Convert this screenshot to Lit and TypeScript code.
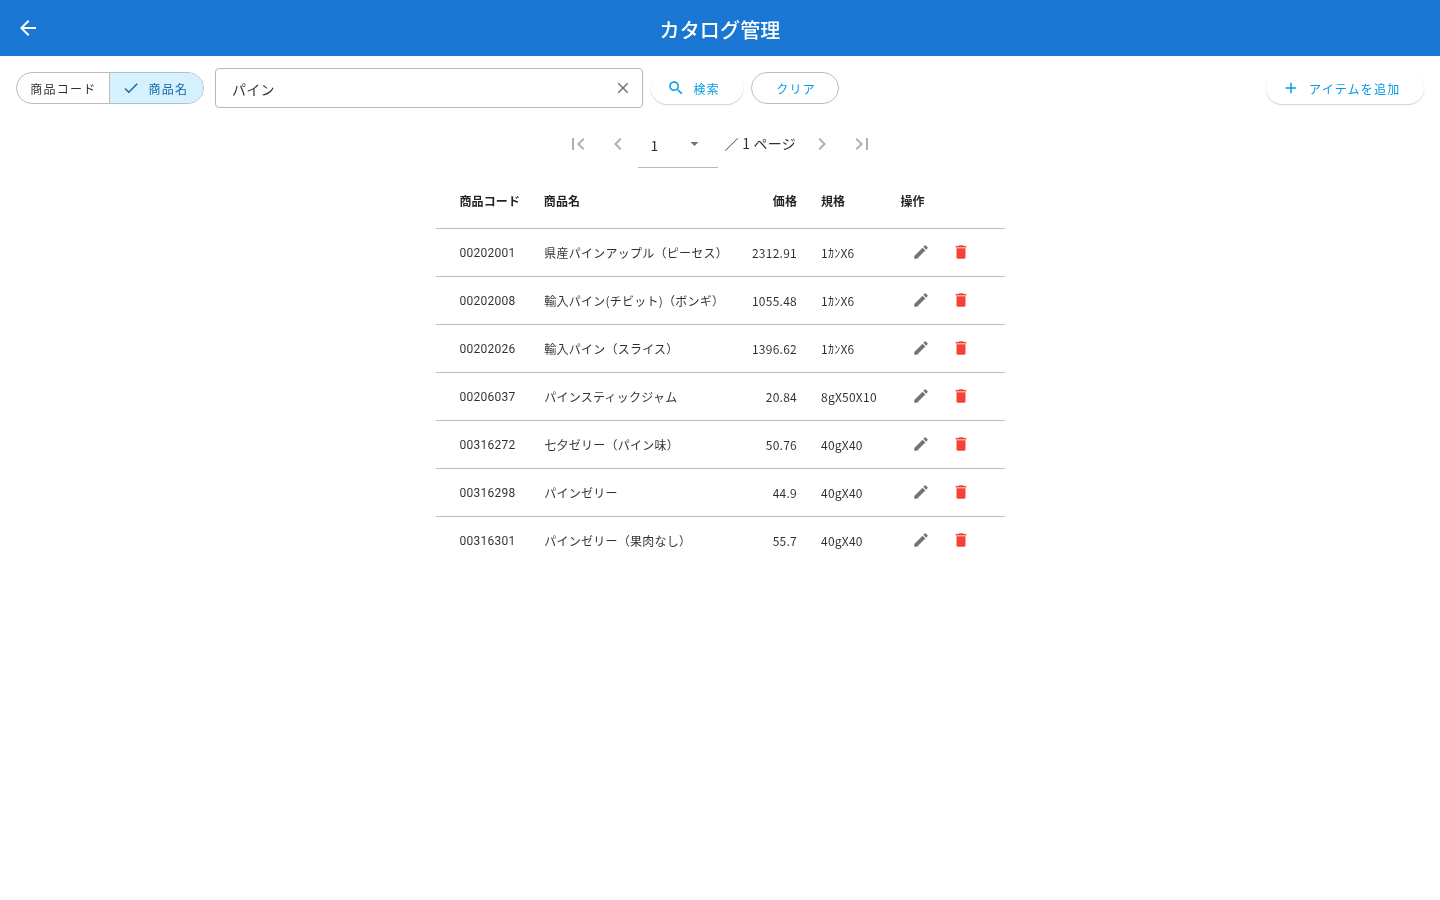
import { LitElement, html, css, svg } from "lit";
import { customElement } from "lit/decorators.js";

const paths = {
  back: "M20 11H7.83l5.59-5.59L12 4l-8 8 8 8 1.41-1.41L7.83 13H20v-2z",
  check: "M9 16.17L4.83 12l-1.42 1.41L9 19 21 7l-1.41-1.41z",
  close: "M19 6.41L17.59 5 12 10.59 6.41 5 5 6.41 10.59 12 5 17.59 6.41 19 12 13.41 17.59 19 19 17.59 13.41 12z",
  search: "M15.5 14h-.79l-.28-.27C15.41 12.59 16 11.11 16 9.5 16 5.91 13.09 3 9.5 3S3 5.91 3 9.5 5.91 16 9.5 16c1.61 0 3.09-.59 4.23-1.57l.27.28v.79l5 4.99L20.49 19l-4.99-5zm-6 0C7.01 14 5 11.99 5 9.5S7.01 5 9.5 5 14 7.01 14 9.5 11.99 14 9.5 14z",
  add: "M19 13h-6v6h-2v-6H5v-2h6V5h2v6h6v2z",
  first: "M18.41 16.59L13.82 12l4.59-4.59L17 6l-6 6 6 6zM6 6h2v12H6z",
  prev: "M15.41 7.41L14 6l-6 6 6 6 1.41-1.41L10.83 12z",
  next: "M10 6L8.59 7.41 13.17 12l-4.58 4.59L10 18l6-6z",
  last: "M5.59 7.41L10.18 12l-4.59 4.59L7 18l6-6-6-6zM16 6h2v12h-2z",
  drop: "M7 10l5 5 5-5z",
  edit: "M3 17.25V21h3.75L17.81 9.94l-3.75-3.75L3 17.25zM20.71 7.04c.39-.39.39-1.02 0-1.41l-2.34-2.34c-.39-.39-1.02-.39-1.41 0l-1.83 1.83 3.75 3.75 1.83-1.83z",
  remove: "M6 19c0 1.1.9 2 2 2h8c1.1 0 2-.9 2-2V7H6v12zM19 4h-3.5l-1-1h-5l-1 1H5v2h14V4z",
};

const icon = (name: keyof typeof paths, size: number) =>
  html`<svg width=${size} height=${size} viewBox="0 0 24 24" fill="currentColor">${svg`<path d=${paths[name]}></path>`}</svg>`;

const items = [
  ["00202001", "県産パインアップル（ピーセス）", "2312.91", "1ｶﾝX6"],
  ["00202008", "輸入パイン(チビット)（ボンギ）", "1055.48", "1ｶﾝX6"],
  ["00202026", "輸入パイン（スライス）", "1396.62", "1ｶﾝX6"],
  ["00206037", "パインスティックジャム", "20.84", "8gX50X10"],
  ["00316272", "七夕ゼリー（パイン味）", "50.76", "40gX40"],
  ["00316298", "パインゼリー", "44.9", "40gX40"],
  ["00316301", "パインゼリー（果肉なし）", "55.7", "40gX40"],
];

@customElement("app-root")
export class AppRoot extends LitElement {
  static styles = css`
    :host {
      display: block;
      height: 900px;
      color: rgba(0, 0, 0, 0.82);
      font: 400 12px/20px "Noto Sans CJK JP", sans-serif;
      opacity: 0.999;
      will-change: transform;
    }
    * { box-sizing: border-box; }
    svg { display: block; flex: none; }
    .appbar {
      height: 56px;
      display: grid;
      grid-template-columns: 56px 1fr 56px;
      align-items: center;
      justify-items: center;
      background: #1976d2;
      color: #fff;
    }
    .title { font-size: 20px; font-weight: 500; line-height: 30px; padding-top: 3px; letter-spacing: 0.15px; }
    .toolbar { height: 64px; padding: 0 16px; display: flex; align-items: center; }
    .label { padding-top: 2px; letter-spacing: 1.25px; white-space: nowrap; }
    .segments {
      width: 187.5px;
      height: 32px;
      display: grid;
      grid-template-columns: 92px 1fr;
      border: 1px solid #bdbdbd;
      border-radius: 16px;
      overflow: hidden;
    }
    .segment { display: flex; align-items: center; padding-left: 13.2px; }
    .selected { border-left: 1px solid #bdbdbd; background: #d4f1ff; color: #1a679f; gap: 8.5px; padding-left: 12px; }
    .field {
      width: 428px;
      height: 40px;
      margin-left: 11.7px;
      padding: 0 10px 0 15.8px;
      display: flex;
      align-items: center;
      justify-content: space-between;
      border: 1px solid #b8b8b8;
      border-radius: 4px;
      color: #757575;
    }
    .value { font-size: 14px; color: rgba(0, 0, 0, 0.82); padding-top: 1px; letter-spacing: 0.25px; }
    .button {
      height: 32px;
      display: flex;
      align-items: center;
      border-radius: 16px;
      color: #039be5;
    }
    .raised { box-shadow: 0 1px 1.5px rgba(0, 0, 0, 0.2), 0 0 1px rgba(0, 0, 0, 0.06); }
    .search { width: 92px; margin-left: 8px; padding-left: 15.5px; gap: 8.8px; }
    .clear { width: 88px; margin-left: 8px; padding-left: 24px; border: 1px solid #bdbdbd; }
    .add { width: 158px; margin-left: auto; padding-left: 16px; gap: 9px; }
    .pager { height: 48px; display: flex; align-items: center; justify-content: center; color: #b0b0b0; }
    .nav { width: 40px; display: flex; justify-content: center; }
    .select {
      width: 80px;
      height: 48px;
      padding: 0 14.5px 0 12.5px;
      display: flex;
      align-items: center;
      justify-content: space-between;
      border-bottom: 1px solid #b8b8b8;
      color: #757575;
    }
    .page { font-size: 14px; color: rgba(0, 0, 0, 0.82); padding-top: 2px; letter-spacing: 0.25px; }
    .total { width: 84px; padding: 0 0 2px 6.5px; font-size: 14px; color: rgba(0, 0, 0, 0.82); letter-spacing: 0.25px; white-space: nowrap; }
    .table { width: 569px; margin: 8px auto 0; }
    .row {
      height: 48px;
      padding: 2px 24px 0;
      display: grid;
      grid-template-columns: 84.3px 178px 75.2px 80px 1fr;
      align-items: center;
      border-top: 1px solid #bdbdbd;
      letter-spacing: 0.25px;
      white-space: nowrap;
    }
    .head { height: 52px; border: 0; font-weight: 700; letter-spacing: 0.1px; padding-top: 0; padding-bottom: 2px; color: rgba(0, 0, 0, 0.87); }
    .text { padding-bottom: 2px; }
    .name { padding-left: 0.4px; }
    .code { font-family: Roboto, sans-serif; padding-bottom: 2px; }
    .price { text-align: right; }
    .spec { padding-left: 24px; }
    .actions { display: flex; align-items: center; padding-left: 23.9px; color: #757575; margin-top: -3px; }
    .action { width: 40px; display: flex; justify-content: center; }
    .danger { color: #f44336; }
    .head .actions { color: inherit; margin: 0; padding-left: 23.5px; }
  `;

  render() {
    return html`
      <header class="appbar">${icon("back", 24)}<span class="title">カタログ管理</span></header>
      <div class="toolbar">
        <div class="segments">
          <div class="segment"><span class="label">商品コード</span></div>
          <div class="segment selected">${icon("check", 18)}<span class="label">商品名</span></div>
        </div>
        <div class="field"><span class="value">パイン</span>${icon("close", 18)}</div>
        <div class="button raised search">${icon("search", 18)}<span class="label">検索</span></div>
        <div class="button clear"><span class="label">クリア</span></div>
        <div class="button raised add">${icon("add", 18)}<span class="label">アイテムを追加</span></div>
      </div>
      <nav class="pager">
        <span class="nav">${icon("first", 24)}</span>
        <span class="nav">${icon("prev", 24)}</span>
        <div class="select"><span class="page">1</span>${icon("drop", 19)}</div>
        <span class="total">／ 1 ページ</span>
        <span class="nav">${icon("next", 24)}</span>
        <span class="nav">${icon("last", 24)}</span>
      </nav>
      <div class="table">
        <div class="row head">
          <span>商品コード</span><span>商品名</span><span class="price">価格</span>
          <span class="spec">規格</span><span class="actions">操作</span>
        </div>
        ${items.map(
          ([code, name, price, spec]) => html`<div class="row">
            <span class="code">${code}</span><span class="text name">${name}</span><span class="text price">${price}</span>
            <span class="text spec">${spec}</span>
            <span class="actions">
              <span class="action">${icon("edit", 18)}</span>
              <span class="action danger">${icon("remove", 18)}</span>
            </span>
          </div>`
        )}
      </div>
    `;
  }
}
